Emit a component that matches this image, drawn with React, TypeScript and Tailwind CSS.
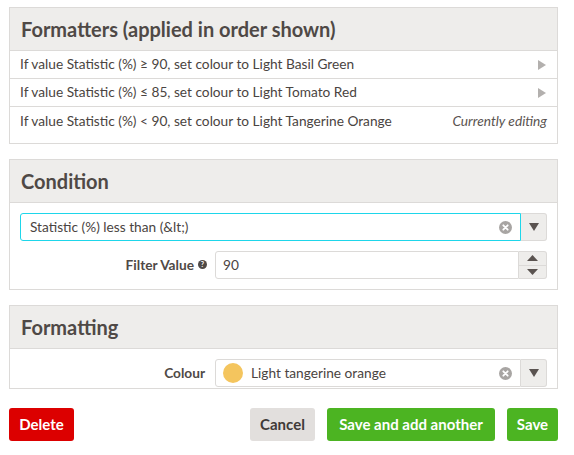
import React from "react";

const font = { fontFamily: "Lato, 'Noto Sans', sans-serif" };

function Caret() {
  return (
    <svg width="10" height="8" viewBox="0 0 10 8"><path d="M0 0h10L5 8z" fill="#5a5350" /></svg>
  );
}

function ClearIcon() {
  return (
    <svg width="13" height="13" viewBox="0 0 13 13">
      <circle cx="6.5" cy="6.5" r="6.5" fill="#a8a5a3" />
      <path d="M4.3 4.3l4.4 4.4M8.7 4.3l-4.4 4.4" stroke="#fff" strokeWidth="1.8" strokeLinecap="round" />
    </svg>
  );
}

function Header({ title }: { title: string }) {
  return (
    <div className="h-[43px] bg-[#eeedeb] border-b border-[#dcdad8] flex items-center px-[11px]">
      <span className="text-[20px] font-bold text-[#4f4946]">{title}</span>
    </div>
  );
}

export default function App() {
  const rows = [
    { t: "If value Statistic (%) ≥ 90, set colour to Light Basil Green", arrow: true },
    { t: "If value Statistic (%) ≤ 85, set colour to Light Tomato Red", arrow: true },
    { t: "If value Statistic (%) < 90, set colour to Light Tangerine Orange", arrow: false },
  ];
  return (
    <div style={font} className="w-[574px] h-[455px] bg-white pt-[7px] pl-[9px] pr-[16px] text-[#4a4441]">
      <div className="border border-[#dcdad8] h-[137px]">
        <Header title="Formatters (applied in order shown)" />
        {rows.map((r, i) => (
          <div key={i} className={`h-[28px] flex items-center justify-between px-[10px] text-[13.7px] ${i < 2 ? "border-b border-[#dcdad8]" : ""}`}>
            <span>{r.t}</span>
            {r.arrow ? (
              <svg width="8" height="10" viewBox="0 0 8 10" className="mr-[1px]"><path d="M0 0l8 5-8 5z" fill="#b3b0ae" /></svg>
            ) : (
              <span className="italic text-[#5a5350]">Currently editing</span>
            )}
          </div>
        ))}
      </div>

      <div className="border border-[#dcdad8] mt-[15px] h-[131px]">
        <Header title="Condition" />
        <div className="px-[10px] pt-[10px] flex flex-col gap-[10px]">
          <div className="flex h-[28px]">
            <div className="flex-1 border border-[#1ed6ea] rounded-l-[3px] flex items-center justify-between pl-[9px] pr-[8px] text-[13.7px]">
              <span>Statistic (%) less than (&amp;lt;)</span>
              <ClearIcon />
            </div>
            <div className="w-[26px] bg-[#eeedeb] border border-[#dcdad8] border-l-0 rounded-r-[3px] flex items-center justify-center">
              <Caret />
            </div>
          </div>
          <div className="flex h-[28px] items-center">
            <div className="w-[195px] flex items-center justify-end gap-[4px] pr-[8px]">
              <span className="text-[13.7px] font-bold text-[#4f4946]">Filter Value</span>
              <svg width="9" height="9" viewBox="0 0 10 10"><circle cx="5" cy="5" r="5" fill="#4f4946" /><text x="5" y="8.2" fontSize="8" fontWeight="bold" textAnchor="middle" fill="#fff" fontFamily="Lato, sans-serif">?</text></svg>
            </div>
            <div className="flex-1 flex h-[28px]">
              <div className="flex-1 border border-[#dcdad8] rounded-l-[3px] flex items-center pl-[7px] text-[13.7px]">90</div>
              <div className="w-[28px] bg-[#eeedeb] border border-[#dcdad8] border-l-0 rounded-r-[3px] flex flex-col">
                <div className="flex-1 flex items-center justify-center border-b border-[#dcdad8]">
                  <svg width="11" height="6" viewBox="0 0 11 6"><path d="M0 6h11L5.5 0z" fill="#5a5350" /></svg>
                </div>
                <div className="flex-1 flex items-center justify-center">
                  <svg width="11" height="6" viewBox="0 0 11 6"><path d="M0 0h11L5.5 6z" fill="#5a5350" /></svg>
                </div>
              </div>
            </div>
          </div>
        </div>
      </div>

      <div className="border border-[#dcdad8] mt-[15px] h-[84px] overflow-hidden">
        <Header title="Formatting" />
        <div className="px-[10px] pt-[10px]">
          <div className="flex h-[28px] items-center">
            <div className="w-[195px] flex items-center justify-end pr-[10px]">
              <span className="text-[13.7px] font-bold text-[#4f4946]">Colour</span>
            </div>
            <div className="flex-1 flex h-[28px]">
              <div className="flex-1 border border-[#dcdad8] rounded-l-[3px] flex items-center justify-between pl-[7px] pr-[8px] text-[13.7px]">
                <div className="flex items-center gap-[8px]">
                  <span className="w-[20px] h-[20px] rounded-full bg-[#f4c55e] inline-block" />
                  <span>Light tangerine orange</span>
                </div>
                <ClearIcon />
              </div>
              <div className="w-[26px] bg-[#eeedeb] border border-[#dcdad8] border-l-0 rounded-r-[3px] flex items-center justify-center">
                <Caret />
              </div>
            </div>
          </div>
        </div>
      </div>

      <div className="mt-[19px] flex items-center">
        <button className="h-[33px] w-[65px] rounded-[3px] bg-[#dc0000] text-white text-[15px] font-bold">Delete</button>
        <div className="flex-1" />
        <button className="h-[33px] w-[65px] rounded-[3px] bg-[#e2dfdd] text-[#3f3a38] text-[15px] font-bold">Cancel</button>
        <button className="h-[33px] w-[168px] ml-[12px] rounded-[3px] bg-[#4cb422] text-white text-[15px] font-bold">Save and add another</button>
        <button className="h-[33px] w-[51px] ml-[12px] rounded-[3px] bg-[#4cb422] text-white text-[15px] font-bold">Save</button>
      </div>
    </div>
  );
}
